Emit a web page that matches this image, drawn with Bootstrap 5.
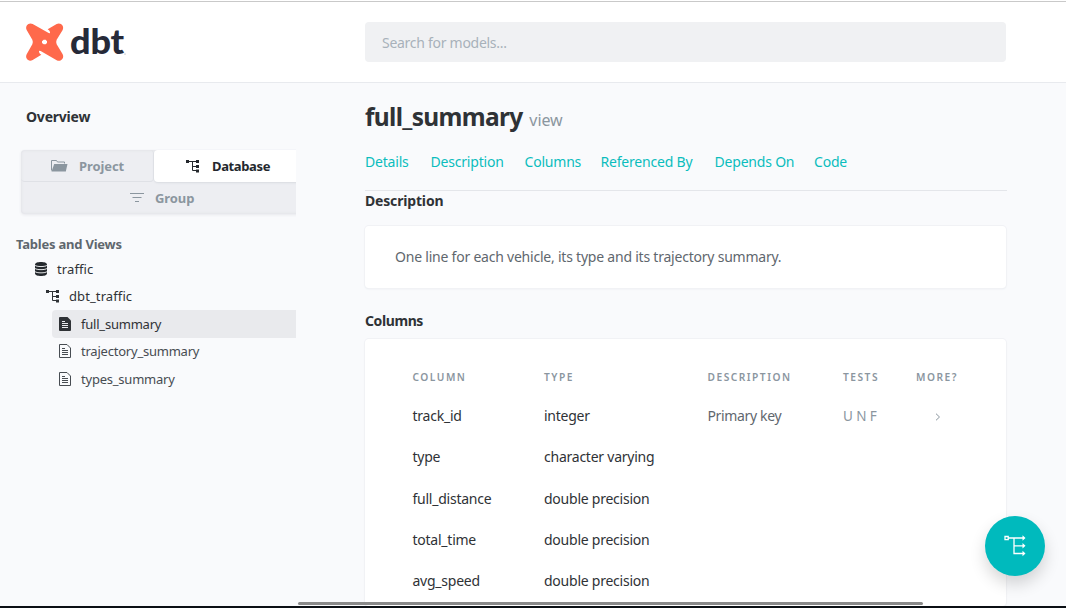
<!DOCTYPE html>
<html lang="en">
<head>
<meta charset="utf-8">
<meta name="viewport" content="width=device-width, initial-scale=1">
<title>dbt Docs</title>
<link href="https://cdn.jsdelivr.net/npm/bootstrap@5.3.0/dist/css/bootstrap.min.css" rel="stylesheet">
<style>
  body { height: 608px; overflow: hidden; background: #f9fafc; color: #2f3236; font-family: "Noto Sans", "Open Sans", sans-serif; font-size: 14px; line-height: 20px; letter-spacing: -.15px; border-bottom: 2px solid #0b0f14; position: relative; }
  .topline { height: 2px; background: #c9c9c9; border-top: 1px solid #fff; }
  .site-header { height: 81px; background: #fff; border-bottom: 1px solid #e8eaee; padding-left: 24px; }
  .brand { width: 341px; flex: none; display: block; line-height: 0; }
  .search { width: 641px; height: 40px; background: #f0f1f3; border: 0; border-radius: 4px; padding: 0 17px; font-size: 14px; letter-spacing: -.28px; }
  .search::placeholder { color: #a8b1ba; opacity: 1; }
  .sidebar { width: 296px; flex: none; overflow: hidden; height: 523px; }
  .overview { padding: 24px 0 0 26px; letter-spacing: -.22px; }
  .switcher { margin: 23px 0 0 21px; width: 300px; height: 64px; background: #edeef2; border-radius: 4px; box-shadow: inset 0 0 3px #dcdee3, 0 1px 3px #e7e8ec; font-size: 13px; color: #8b969f; letter-spacing: -.1px; }
  .switcher .tab { height: 32px; display: flex; align-items: center; }
  .tab-project { width: 133px; padding-left: 30px; border-right: 1px solid #e0e2e7; border-bottom: 1px solid #dfe1e6; border-radius: 4px; }
  .tab-database { width: 167px; padding-left: 32px; background: #fff; color: #24282d; border-radius: 4px; box-shadow: 0 1px 2px #d9dbe0; letter-spacing: -.37px; }
  .tab-group { padding-left: 109px; }
  .tree-title { margin: 20px 0 1px 16px; font-size: 13px; color: #5f676e; letter-spacing: -.22px; }
  .tree { font-size: 13px; letter-spacing: -.15px; }
  .tree a { display: flex; align-items: center; height: 27.5px; color: #2f3236; text-decoration: none; }
  .tree .leaf { margin-left: 52px; padding-left: 6px; color: #474c52; letter-spacing: -.22px; border-radius: 4px 0 0 4px; }
  .tree .leaf svg { margin-right: 9px; }
  .tree .active { background: #e9eaed; color: #2f3236; }
  .content { width: 641px; margin-left: 69px; flex: none; }
  .content h1 { font-size: 24.5px; line-height: 36px; margin: 16px 0 0; letter-spacing: -.67px; font-weight: 700; }
  .content h1 small { font-size: 16px; font-weight: 400; color: #8b969f; letter-spacing: -.1px; margin-left: 1px; }
  .jump { display: grid; grid-template-columns: 65.5px 94px 76px 114px 99.5px auto; margin-top: 14px; }
  .jump a { color: #0bbdbd; text-decoration: none; letter-spacing: -.2px; white-space: nowrap; }
  .rule { height: 1px; background: #e4e6ea; margin: 18px -1px 0 0; }
  .content h2 { font-size: 14px; line-height: 20px; font-weight: 700; margin: 0; letter-spacing: -.17px; }
  .content .h-cols { letter-spacing: -.4px; }
  .panel { background: #fff; border-radius: 4px; box-shadow: 0 0 0 1px #f1f2f5, 0 1px 2px #e6e8ec; }
  .blurb { height: 62px; margin: 15px 0 23px; padding: 0 30px; color: #5f676e; letter-spacing: -.22px; }
  .grid-panel { margin-top: 8px; padding: 20px 0 0 47.5px; height: 267px; overflow: hidden; }
  .cols { table-layout: fixed; width: 580px; }
  .cols td, .cols th { padding: 0; vertical-align: middle; white-space: nowrap; }
  .cols th { height: 36.5px; font-size: 10.2px; font-weight: 600; color: #8b969f; letter-spacing: 1.5px; }
  .cols td { height: 41.25px; letter-spacing: -.24px; }
  .cols .tests { color: #8b969f; font-size: 13.500px; letter-spacing: 3.3px; }
  .graph-btn { position: absolute; left: 985px; top: 516px; width: 60px; height: 60px; border-radius: 50%; background: #00babd; box-shadow: 0 8px 16px rgba(0,0,0,.16); border: 0; padding: 0; }
  .scroller { position: absolute; left: 298px; top: 602px; width: 625px; height: 3px; background: #8a8a8a; border-radius: 2px; }
</style>
</head>
<body>
<svg width="0" height="0" class="position-absolute" aria-hidden="true">
  <symbol id="i-tree" viewBox="0 0 14 14"><path d="M2 2.5h9M6.5 2.5v9H11M6.5 7.500H11" fill="none" stroke="currentColor"/><path d="M0 1h3v3H0zM10 1h3v3H10zM10 6h3v3H10zM10 10.500h3v3H10z" fill="currentColor"/></symbol>
  <symbol id="i-file" viewBox="0 0 14 14"><path d="M1.5.5h7.500l3.500 3.500v9.500h-11zM4 4.500h3M4 6.500h6M4 8.500h6M4 10.500h6" fill="none" stroke="currentColor"/></symbol>
  <symbol id="i-file-fill" viewBox="0 0 14 14"><path d="M2 0h7.500L13 3.500V13a1 1 0 0 1-1 1H2a1 1 0 0 1-1-1V1a1 1 0 0 1 1-1z" fill="currentColor"/><path d="M4 4.500h3M4 6.500h6M4 8.500h6M4 10.500h6" stroke="#e9eaed"/></symbol>
</svg>
<div class="topline"></div>
<header class="site-header d-flex align-items-center">
  <a class="brand" href="#">
    <svg width="104" height="48" viewBox="0 0 104 48" role="img" aria-label="dbt">
      <path transform="translate(-24 -18) scale(.33333)" fill="#ff694b" fill-rule="evenodd" d="M98 72L146 99Q151 101 150 96Q149 91 143 88L170 72C182 66 194 78 188 90L170 119Q167 126 170 133L188 163C194 175 182 187 170 181L122 153Q116 150 117 156Q119 162 124 164L98 180C86 187 74 175 80 163L97 133Q100 126 97 119L80 90C74 78 86 66 98 72ZM131 119L126 124V129L131 133H137L141 129V124L137 119Z"/>
      <text x="46" y="36.300" font-family="Lato" font-weight="900" font-size="34" textLength="54" lengthAdjust="spacingAndGlyphs" fill="#262a38">dbt</text>
      <circle cx="101" cy="36" r=".5" fill="#777b85"/>
    </svg>
  </a>
  <input class="search" type="text" placeholder="Search for models..." aria-label="Search">
</header>
<div class="d-flex">
  <aside class="sidebar">
    <div class="overview fw-bold">Overview</div>
    <div class="switcher fw-bold">
      <div class="d-flex">
        <div class="tab tab-project"><svg width="17" height="14" viewBox="0 0 17 14" class="me-2"><path d="M.5 11.500V1.500h5l1 1.500h7v1.500" fill="none" stroke="currentColor"/><path d="M3.200 5H16.500L14.800 12.500H.500z" fill="currentColor"/></svg><span style="padding-left:3px">Project</span></div>
        <div class="tab tab-database"><svg width="14" height="14"><use href="#i-tree"/></svg><span style="margin-left:12px">Database</span></div>
      </div>
      <div class="tab tab-group"><svg width="14" height="12" viewBox="0 0 14 12" class="me-2"><path d="M0 1.500h14M2.500 5.500h9M5 9.500h4" stroke="currentColor"/></svg><span style="padding-left:3px">Group</span></div>
    </div>
    <div class="tree-title fw-bold">Tables and Views</div>
    <nav class="tree">
      <a href="#" style="padding-left:34px"><svg width="14" height="14" viewBox="0 0 14 14"><path d="M1 2.500C1 .800 4 0 7 0s6 .800 6 2.500v9C13 13.200 10 14 7 14s-6-.800-6-2.500z" fill="#24282d"/><path d="M1 3.200c1 1.800 11 1.800 12 0M1 6.300c1 1.800 11 1.800 12 0M1 9.500c1 1.800 11 1.800 12 0" fill="none" stroke="#f9fafc" stroke-width=".9"/></svg><span style="margin-left:9px;letter-spacing:.1px">traffic</span></a>
      <a href="#" style="padding-left:46px"><svg width="14" height="14"><use href="#i-tree"/></svg><span style="margin-left:9px;letter-spacing:.1px">dbt_traffic</span></a>
      <a href="#" class="leaf active"><svg width="14" height="14"><use href="#i-file-fill"/></svg><span>full_summary</span></a>
      <a href="#" class="leaf"><svg width="14" height="14"><use href="#i-file"/></svg><span>trajectory_summary</span></a>
      <a href="#" class="leaf"><svg width="14" height="14"><use href="#i-file"/></svg><span>types_summary</span></a>
    </nav>
  </aside>
  <main class="content">
    <h1>full_summary <small>view</small></h1>
    <nav class="jump"><a href="#">Details</a><a href="#">Description</a><a href="#">Columns</a><a href="#">Referenced By</a><a href="#">Depends On</a><a href="#">Code</a></nav>
    <div class="rule"></div>
    <h2>Description</h2>
    <div class="panel blurb d-flex align-items-center">One line for each vehicle, its type and its trajectory summary.</div>
    <h2 class="h-cols">Columns</h2>
    <div class="panel grid-panel">
      <table class="cols">
        <colgroup><col style="width:131.500px"><col style="width:163.500px"><col style="width:135.500px"><col style="width:73px"><col></colgroup>
        <thead><tr><th>COLUMN</th><th>TYPE</th><th>DESCRIPTION</th><th>TESTS</th><th>MORE?</th></tr></thead>
        <tbody>
          <tr><td>track_id</td><td>integer</td><td style="color:#5f676e;letter-spacing:-.35px">Primary key</td><td class="tests">UNF</td><td><svg width="6" height="8" viewBox="0 0 6 8" style="margin-left:19px"><path d="M1 .700L4.500 4 1 7.300" fill="none" stroke="#8b969f"/></svg></td></tr>
          <tr><td>type</td><td>character varying</td><td></td><td></td><td></td></tr>
          <tr><td>full_distance</td><td>double precision</td><td></td><td></td><td></td></tr>
          <tr><td>total_time</td><td>double precision</td><td></td><td></td><td></td></tr>
          <tr><td>avg_speed</td><td>double precision</td><td></td><td></td><td></td></tr>
        </tbody>
      </table>
    </div>
  </main>
</div>
<button class="graph-btn" type="button" aria-label="Lineage graph"><svg width="22" height="22" viewBox="0 0 22 22" fill="none" stroke="#fff"><path d="M1 1.500h3.200v3.200H1zM4.500 3H19M10 3v15.500h9M10 10.800h9" stroke-width="1.300"/><path d="M18.500.300L21.500 3l-3 2.700zM18.500 8.100l3 2.700-3 2.700zM18.500 15.800l3 2.700-3 2.700z" fill="#fff" stroke="none"/></svg></button>
<div class="scroller"></div>
<script src="https://cdn.jsdelivr.net/npm/bootstrap@5.3.0/dist/js/bootstrap.bundle.min.js"></script>
</body>
</html>
